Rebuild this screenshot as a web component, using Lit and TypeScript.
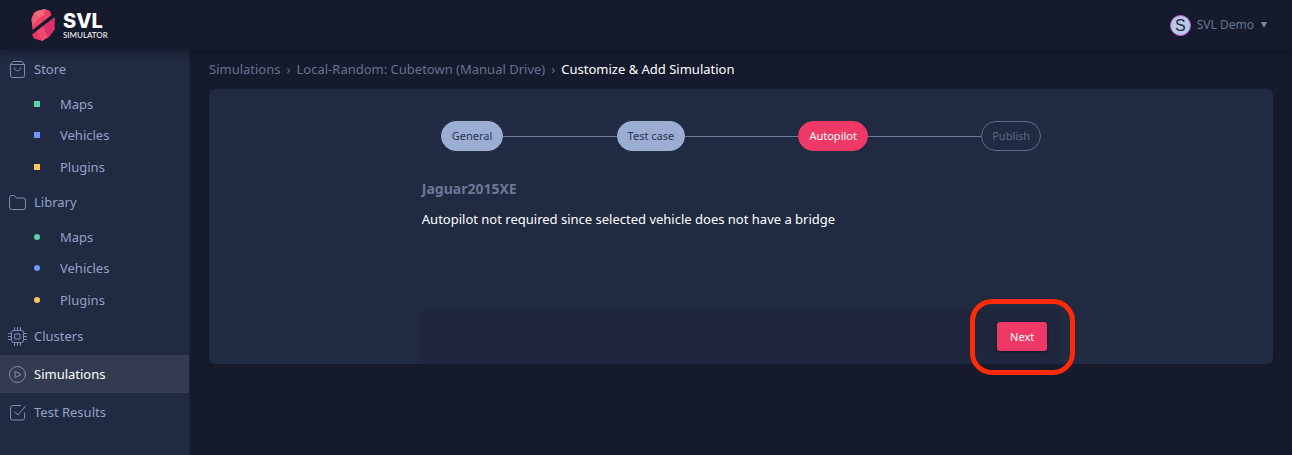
import { LitElement, html, svg, css, nothing } from "lit";
import { customElement, property } from "lit/decorators.js";
import { classMap } from "lit/directives/class-map.js";

const icons = {
  store: svg`<path d="M2.5 4.500 5 1.500h9l2.500 3v11a2 2 0 0 1-2 2h-10a2 2 0 0 1-2-2z M2.500 4.500h14 M6.500 8c0 3.700 6 3.700 6 0"/>`,
  library: svg`<path d="M1.500 4.500a2 2 0 0 1 2-2h3l2 2.500h7a2 2 0 0 1 2 2v7.500a2 2 0 0 1-2 2h-12a2 2 0 0 1-2-2z"/>`,
  clusters: svg`<rect x="3.500" y="3.500" width="12" height="12" rx="2"/><rect x="7" y="7" width="5" height="5"/><path d="M6.500 3.500V.5 M9.500 3.500V.5 M12.500 3.500V.5 M6.500 18.500v-3 M9.500 18.500v-3 M12.500 18.500v-3 M3.500 6.500H.5 M3.500 9.500H.5 M3.500 12.500H.5 M18.500 6.500h-3 M18.500 9.500h-3 M18.500 12.500h-3"/>`,
  simulations: svg`<circle cx="9.500" cy="9.500" r="8"/><path d="M7.500 6.500l5.500 3-5.500 3z"/>`,
  results: svg`<path d="M12.500 2.500h-8a2 2 0 0 0-2 2v10.500a2 2 0 0 0 2 2h10a2 2 0 0 0 2-2V10 M6.500 9l3.500 3 7.500-9"/>`,
};

type IconName = keyof typeof icons;

interface NavEntry {
  label: string;
  icon: IconName;
  shape?: "square" | "round";
  active?: boolean;
}

const catalog: NavEntry[] = [
  { label: "Store", icon: "store", shape: "square" },
  { label: "Library", icon: "library", shape: "round" },
];

const workspace: NavEntry[] = [
  { label: "Clusters", icon: "clusters" },
  { label: "Simulations", icon: "simulations", active: true },
  { label: "Test Results", icon: "results" },
];

const assets = [
  { label: "Maps", tone: "green" },
  { label: "Vehicles", tone: "blue" },
  { label: "Plugins", tone: "yellow" },
];

@customElement("app-header")
export class AppHeader extends LitElement {
  static styles = css`
    :host {
      display: flex;
      align-items: center;
      justify-content: space-between;
      height: 50px;
      padding: 0 24px 0 31px;
      background: #151b2d;
      box-shadow: 0 2px 8px rgba(8, 11, 24, 0.4);
      position: relative;
    }
    .brand {
      display: flex;
      align-items: center;
      gap: 8px;
      color: #fff;
      text-decoration: none;
    }
    .mark {
      display: block;
      width: 24px;
      height: 32px;
    }
    .words {
      display: flex;
      flex-direction: column;
      gap: 1px;
      padding-top: 2px;
    }
    .name {
      font-family: Inter, sans-serif;
      font-size: 20px;
      line-height: 16px;
      font-weight: 800;
    }
    .tag {
      font-family: Lato, sans-serif;
      font-size: 8px;
      line-height: 10px;
      font-weight: 400;
    }
    .account {
      display: flex;
      align-items: center;
      gap: 6px;
      padding: 0;
      border: 0;
      background: none;
      color: #65728f;
      font: 12px/16px "Noto Sans", sans-serif;
    }
    .avatar {
      box-sizing: border-box;
      width: 21px;
      height: 21px;
      border: 1px solid #c65fce;
      border-radius: 50%;
      background: #b9c9e8;
      color: #20283f;
      font: 16px/19px "Liberation Sans", sans-serif;
      text-align: center;
    }
    .caret {
      width: 8px;
      height: 6px;
      fill: #7a88a8;
    }
  `;

  render() {
    return html`
      <a class="brand" href="#" aria-label="SVL Simulator">
        <svg class="mark" viewBox="0 0 24 32" aria-hidden="true">
          <path fill="#ee4168" d="M6 2 14 0l5 2 1.500 4L1.500 21 .5 10 3 4z" />
          <path fill="#f4687c" d="M6 2 14 0l-1 6-5 3-5-5z" />
          <path fill="#ef5a70" d="m3 4 5 5-6.500 8-1-7z" />
          <path fill="#e4376a" d="M23.500 8.500v12L18 28l-7 4-8-2.500-2-4z" />
          <path fill="#ee4a6c" d="m12 17 5 11-6 4-5-10z" />
          <path fill="#dd3069" d="m23.500 8.500v12L17 28l-5-11z" />
        </svg>
        <span class="words">
          <span class="name">SVL</span>
          <span class="tag">SIMULATOR</span>
        </span>
      </a>
      <button class="account" type="button">
        <span class="avatar">S</span>
        <span>SVL Demo</span>
        <svg class="caret" viewBox="0 0 8 6" aria-hidden="true"><path d="M1 0h6L4 6z" /></svg>
      </button>
    `;
  }
}

@customElement("app-sidebar")
export class AppSidebar extends LitElement {
  static styles = css`
    :host {
      display: block;
      box-sizing: border-box;
      background: #202a41;
      border-right: 1px solid #1c2439;
      font: 13px/20px "Noto Sans", sans-serif;
    }
    nav {
      display: grid;
      gap: 1px;
    }
    ul {
      margin: 0;
      padding: 0;
      list-style: none;
    }
    a {
      color: #92a2c8;
      text-decoration: none;
    }
    .entry {
      display: flex;
      align-items: center;
      gap: 7px;
      height: 38px;
      padding-left: 8px;
    }
    .active {
      background: #333b50;
      color: #fff;
    }
    .icon {
      width: 19px;
      height: 19px;
      fill: none;
      stroke: #7f8db3;
      stroke-width: 1;
      stroke-linejoin: round;
      stroke-linecap: round;
    }
    .assets {
      display: grid;
      grid-template-rows: repeat(3, 1fr);
      height: 95px;
    }
    .asset {
      display: flex;
      align-items: center;
      gap: 20px;
      height: 100%;
      padding-left: 34px;
    }
    .bullet {
      width: 6px;
      height: 6px;
    }
    .round {
      border-radius: 50%;
    }
    .green {
      background: #5bcfa5;
    }
    .blue {
      background: #6f98fa;
    }
    .yellow {
      background: #f3c65f;
    }
  `;

  private entry(item: NavEntry) {
    return html`
      <li>
        <a
          class=${classMap({ entry: true, active: !!item.active })}
          href="#"
          aria-current=${item.active ? "page" : nothing}
        >
          <svg class="icon" viewBox="0 0 19 19" aria-hidden="true">${icons[item.icon]}</svg>
          <span>${item.label}</span>
        </a>
        ${item.shape
          ? html`<ul class="assets">
              ${assets.map(
                (asset) => html`<li>
                  <a class="asset" href="#">
                    <span
                      class=${classMap({
                        bullet: true,
                        round: item.shape === "round",
                        [asset.tone]: true,
                      })}
                    ></span>
                    <span>${asset.label}</span>
                  </a>
                </li>`
              )}
            </ul>`
          : nothing}
      </li>
    `;
  }

  render() {
    return html`
      <nav aria-label="Main">
        <ul>${catalog.map((item) => this.entry(item))}</ul>
        <ul>${workspace.map((item) => this.entry(item))}</ul>
      </nav>
    `;
  }
}

@customElement("step-track")
export class StepTrack extends LitElement {
  @property({ attribute: false }) steps: string[] = [];
  @property({ type: Number }) current = 0;

  static styles = css`
    :host {
      display: block;
    }
    ol {
      display: flex;
      align-items: center;
      margin: 0;
      padding: 0 19px;
      list-style: none;
      font: 11px/16px "Noto Sans", sans-serif;
    }
    .line {
      flex: 1;
      height: 1px;
      background: #6b7a9b;
    }
    .step {
      padding: 6px 10px;
      border: 1px solid #5f6d8b;
      border-radius: 15px;
      color: #5a6886;
    }
    .done {
      background: #9cadd3;
      border-color: #9cadd3;
      color: #2a3552;
    }
    .current {
      background: #ee3866;
      border-color: #ee3866;
      color: #fff;
    }
  `;

  render() {
    return html`<ol>
      ${this.steps.map(
        (label, index) => html`
          ${index ? html`<li class="line" role="presentation"></li>` : nothing}
          <li
            class=${classMap({
              step: true,
              done: index < this.current,
              current: index === this.current,
            })}
            aria-current=${index === this.current ? "step" : nothing}
          >${label}</li>
        `
      )}
    </ol>`;
  }
}

@customElement("app-root")
export class AppRoot extends LitElement {
  static styles = css`
    :host {
      display: grid;
      grid-template-rows: auto 1fr;
      min-height: 100vh;
      background: #151a2c;
      color: #fff;
      font: 13px/20px "Noto Sans", sans-serif;
    }
    app-header {
      z-index: 1;
    }
    .body {
      display: grid;
      grid-template-columns: 190px 1fr;
    }
    main {
      padding: 9px 19px;
    }
    .crumbs {
      display: flex;
      gap: 6px;
      color: #65728f;
    }
    .crumbs a {
      color: inherit;
      text-decoration: none;
    }
    .here {
      color: #fff;
    }
    .card {
      margin-top: 10px;
      padding-top: 32px;
      border-radius: 6px;
      background: #202a41;
    }
    .form {
      width: 60%;
      margin: 0 auto;
    }
    h2 {
      margin: 28px 0 0;
      font-size: 14px;
      line-height: 20px;
      font-weight: 700;
      color: #6b7897;
    }
    p {
      margin: 10px 0 80px;
    }
    .actions {
      display: flex;
      justify-content: flex-end;
      padding: 13px;
      background: #1f273f;
    }
    .highlight {
      position: relative;
    }
    .highlight::after {
      content: "";
      position: absolute;
      inset: -23px -28px -24px -27px;
      border: 5px solid #ff2a06;
      border-radius: 22px;
      pointer-events: none;
    }
    .next {
      display: block;
      height: 29px;
      padding: 0 13px;
      border: 0;
      border-radius: 3px;
      background: #ee3866;
      box-shadow: 0 1px 3px rgba(0, 0, 0, 0.5);
      color: #fff;
      font: 11px/16px "Noto Sans", sans-serif;
    }
  `;

  render() {
    return html`
      <app-header></app-header>
      <div class="body">
        <app-sidebar></app-sidebar>
        <main>
          <nav class="crumbs" aria-label="Breadcrumb">
            <a href="#">Simulations</a>
            <span>›</span>
            <a href="#">Local-Random: Cubetown (Manual Drive)</a>
            <span>›</span>
            <span class="here" aria-current="page">Customize &amp; Add Simulation</span>
          </nav>
          <section class="card">
            <div class="form">
              <step-track
                .steps=${["General", "Test case", "Autopilot", "Publish"]}
                .current=${2}
              ></step-track>
              <h2>Jaguar2015XE</h2>
              <p>Autopilot not required since selected vehicle does not have a bridge</p>
              <div class="actions">
                <div class="highlight">
                  <button class="next" type="button">Next</button>
                </div>
              </div>
            </div>
          </section>
        </main>
      </div>
    `;
  }
}
